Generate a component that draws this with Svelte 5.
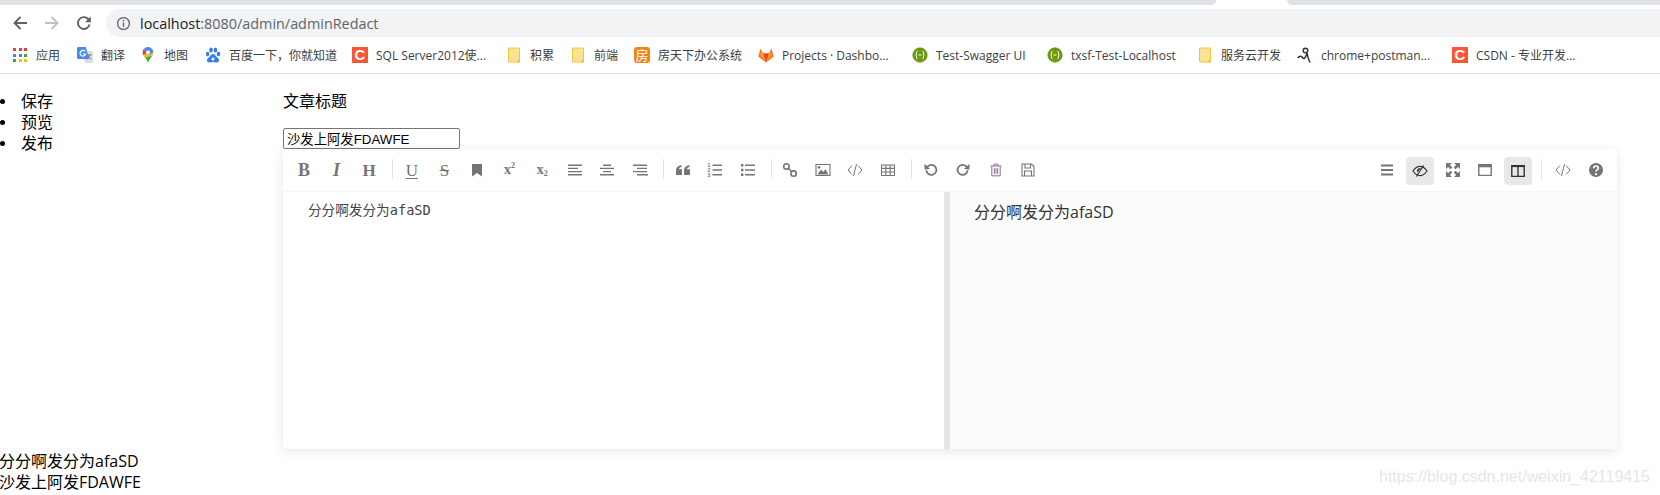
<script>
  const bookmarks = [
    { icon: 'apps', label: '应用', w: 23 },
    { icon: 'translate', label: '翻译', w: 21 },
    { icon: 'maps', label: '地图', w: 23 },
    { icon: 'baidu', label: '百度一下，你就知道', w: 105 },
    { icon: 'csdn', label: 'SQL Server2012使...', w: 112 },
    { icon: 'folder', label: '积累', w: 22 },
    { icon: 'folder', label: '前端', w: 22 },
    { icon: 'fang', label: '房天下办公系统', w: 82 },
    { icon: 'gitlab', label: 'Projects · Dashbo...', w: 112 },
    { icon: 'swagger', label: 'Test-Swagger UI', w: 93 },
    { icon: 'swagger', label: 'txsf-Test-Localhost', w: 108 },
    { icon: 'folder', label: '服务云开发', w: 58 },
    { icon: 'postman', label: 'chrome+postman...', w: 113 },
    { icon: 'csdn', label: 'CSDN - 专业开发...', w: 104 }
  ];

  const appColors = ['#ea4335', '#ea4335', '#ea4335', '#4285f4', '#4285f4', '#34a853', '#34a853', '#fbbc05', '#fbbc05'];

  const left = [
    [
      { t: 'B', c: 'bold' },
      { t: 'I', c: 'ital' },
      { t: 'H', c: 'head' }
    ],
    [
      { t: 'U', c: 'under' },
      { t: 'S', c: 'strike' },
      { f: 'M3 2h10v12.5L8 11l-5 3.5z' },
      { t: 'x', sup: '2', c: 'script' },
      { t: 'x', sub: '2', c: 'script' },
      { s: 'M1 3.2h14M1 6.4h10M1 9.6h14M1 12.8h14', sw: 1.4 },
      { s: 'M4 3.2h8M1 6.4h14M4 9.6h8M1 12.8h14', sw: 1.4 },
      { s: 'M1 3.2h14M5 6.4h10M1 9.6h14M5 12.8h14', sw: 1.4 }
    ],
    [
      { f: 'M1 8.5C1 5.5 3 3.5 6.5 3v2C5 5.3 4 6 3.8 7.2H7V13H1zM9 8.5C9 5.5 11 3.5 14.5 3v2C13 5.3 12 6 11.8 7.2H15V13H9z' },
      { s: 'M5.5 3.2h9.5M5.5 8h9.5M5.5 12.8h9.5', sw: 1.5, nums: true },
      { s: 'M5 3.2h10M5 8h10M5 12.8h10', sw: 1.6, f: 'M1 2h2.4v2.4H1zM1 6.8h2.4v2.4H1zM1 11.6h2.4V14H1z' }
    ],
    [
      { s: 'M6.8 6.8l2.4 2.4', sw: 1.6, c1: [4.4, 4.4, 2.7], c2: [11.6, 11.6, 2.7] },
      { s: 'M1 2.5h14v11H1z', sw: 1.1, f: 'M2.5 12.5l3.5-5 2.5 2.5 2-3 3 5.500zM4 4a1.400 1.400 0 1 0 .01 0z' },
      { s: 'M5 3.5L1 8l4 4.5M11 3.5l4 4.5-4 4.5M9.5 2L6.5 14', sw: 1 },
      { s: 'M1.5 3h13v10.5h-13zM1.5 6.4h13M1.5 10h13M5.8 3v10.5M10.2 3v10.5', sw: 1.1 }
    ],
    [
      { s: 'M3.4 8.2A5 5 0 1 0 5 4.2L2.6 6', sw: 1.8, f: 'M1.4 1.8l.2 5.8 5.4-.6z' },
      { s: 'M12.6 8.2A5 5 0 1 1 11 4.2L13.4 6', sw: 1.8, f: 'M14.6 1.8l-.2 5.8-5.4-.6z' },
      { s: 'M2.5 4h11M6 4V2.2h4V4M3.8 4v9.8h8.4V4M6.3 6.2v5.6M8 6.2v5.6M9.7 6.2v5.6', sw: 1, tone: 'plum' },
      { s: 'M2 2h9.5L14 4.5V14H2zM5 2v4h5.5V2M4.5 14V9h7v5', sw: 1.1 }
    ]
  ];

  const right = [
    [
      { s: 'M2 3.5h12M2 8h12M2 12.5h12', sw: 1.8 },
      { s: 'M1 8c2-3 4.4-4.6 7-4.6S13 5 15 8c-2 3-4.4 4.6-7 4.6S3 11 1 8zM11.5 2.5l-7 11', sw: 1.2, f: 'M8 5a3 3 0 0 0-2.6 4.6L8.9 5.1A3 3 0 0 0 8 5z', on: true },
      { f: 'M1 1h6L4.900 3.100 7.300 5.500 5.500 7.300 3.100 4.900 1 7zM15 1v6l-2.100-2.100L10.500 7.300 8.700 5.500 11.100 3.100 9 1zM1 15V9l2.100 2.100L5.500 8.700 7.300 10.500 4.900 12.900 7 15zM15 15H9l2.100-2.100L8.700 10.500 10.500 8.700 12.900 11.100 15 9z' },
      { s: 'M1.800 2.600h12.400v10.800H1.800z', sw: 1.4, f: 'M1.500 2.300h13v3h-13z' },
      { s: 'M1.800 2.600h12.400v10.800H1.800zM8 2.600v10.800', sw: 1.4, f: 'M1.500 2.300h13v1.800h-13z', on: true }
    ],
    [
      { s: 'M5 3.5L1 8l4 4.5M11 3.5l4 4.5-4 4.5M9.5 2L6.5 14', sw: 1 },
      { f: 'M8 1a7 7 0 1 0 .01 0z', s: 'M5.800 6.200C5.800 4.900 6.800 4 8 4s2.300.9 2.300 2.100c0 1.800-2.300 1.800-2.300 3.500', sw: 1.7, tone: 'help' }
    ]
  ];
</script>

{#snippet favicon(kind)}
  {#if kind === 'apps'}
    <span class="apps">
      {#each appColors as color}
        <i style:background={color}></i>
      {/each}
    </span>
  {:else if kind === 'translate'}
    <svg class="fav" viewBox="0 0 16 16">
      <path d="M6 4h9a1 1 0 0 1 1 1v10a1 1 0 0 1-1 1H8z" fill="#d9dce0" />
      <path d="M1.200 0h7.600L12 12H1.200A1.200 1.200 0 0 1 0 10.800V1.200A1.200 1.200 0 0 1 1.200 0z" fill="#4a8af4" />
      <path d="M8 4.400A2.800 2.800 0 1 0 8.600 7H6" fill="none" stroke="#fff" stroke-width="1.200" />
      <path d="M10 8h4.500M12.200 7v1.200c0 1.800-1 3-2.400 3.800M11 9c.4 1.200 1.600 2.400 3.200 3" fill="none" stroke="#6b7076" stroke-width=".9" />
    </svg>
  {:else if kind === 'maps'}
    <svg class="fav" viewBox="0 0 16 16">
      <path d="M3.600 8.400c1.400 2 3.400 3.800 4.400 7.600 1-3.800 3-5.600 4.400-7.600z" fill="#34a853" />
      <path d="M8 0a5.400 5.400 0 0 0-4.200 2L7 6l4.600-4.600A5.400 5.400 0 0 0 8 0z" fill="#4285f4" />
      <path d="M3.800 2a5.400 5.400 0 0 0-1.200 3.400c0 1.200.4 2.200 1 3L7 6z" fill="#ea4335" />
      <path d="M11.600 1.400L3.600 8.400l2 2.400 6.800-2.400c.6-.8 1-1.800 1-3 0-1.600-.7-3-1.800-4z" fill="#fbbc05" />
      <path d="M11.600 1.400L6 7l4 .5 3-2.500c0-1.500-.4-2.600-1.400-3.600z" fill="#4285f4" />
      <circle cx="8" cy="5.400" r="1.900" fill="#fff" />
    </svg>
  {:else if kind === 'baidu'}
    <svg class="fav" viewBox="0 0 16 16" fill="#3a7cf0">
      <ellipse cx="2.600" cy="7" rx="1.800" ry="2.300" />
      <ellipse cx="6" cy="3" rx="1.800" ry="2.500" />
      <ellipse cx="10.400" cy="3" rx="1.800" ry="2.500" />
      <ellipse cx="13.500" cy="7" rx="1.800" ry="2.300" />
      <path d="M8 7c-2 0-2.500 2-4 3.200C2.600 11.300 2 12.300 2 13.300 2 15 3.500 15.800 5 15.500c1-.2 2-.4 3-.4s2 .2 3 .4c1.500.3 3-.5 3-2.200 0-1-.6-2-2-3.100C10.500 9 10 7 8 7z" />
      <circle cx="8" cy="12" r="1.500" fill="#fff" />
    </svg>
  {:else if kind === 'csdn'}
    <span class="badge csdn">C</span>
  {:else if kind === 'folder'}
    <svg class="fav" viewBox="0 0 16 16">
      <path d="M2.500 1h10.500a.5.500 0 0 1 .5.500V15H3a.5.500 0 0 1-.5-.5z" fill="#fde293" stroke="#f1c542" />
      <path d="M11.500 12.800h2.500V15.500h-2.500z" fill="#f1c542" />
    </svg>
  {:else if kind === 'fang'}
    <span class="badge fang">房</span>
  {:else if kind === 'gitlab'}
    <svg class="fav" viewBox="0 0 16 16">
      <path d="M8 15.500L.3 9.500 2.600 1.500 5 6.500h6l2.400-5 2.300 8z" fill="#fc6d26" />
      <path d="M8 15.500L5 6.500h6z" fill="#e24329" />
      <path d="M8 15.500L5 6.500H1.400z" fill="#fca326" />
      <path d="M8 15.500L11 6.500h3.600z" fill="#fca326" />
    </svg>
  {:else if kind === 'swagger'}
    <svg class="fav" viewBox="0 0 16 16">
      <circle cx="8" cy="8" r="7.200" fill="#6d9b08" stroke="#55800a" stroke-width=".6" />
      <path d="M5.600 3.800C4 4.500 5.200 7.200 3.800 8c1.400.8.200 3.500 1.800 4.200M10.400 3.800c1.600.7.400 3.400 1.800 4.200-1.400.8-.2 3.500-1.800 4.200M6.500 8h3" fill="none" stroke="#fff" stroke-width="1" />
    </svg>
  {:else}
    <svg class="fav" viewBox="0 0 16 16">
      <circle cx="8.500" cy="3.500" r="2.300" fill="none" stroke="#333" stroke-width="1.400" />
      <path d="M.500 11c2-2.500 4-2.500 5.500 0 1 1.600 3-.5 4-5 .5 3 1.500 6.500 3 9.500" fill="none" stroke="#333" stroke-width="1.500" />
    </svg>
  {/if}
{/snippet}

{#snippet tool(b)}
  <span class="tool" class:on={b.on}>
    {#if b.t}
      <span class="glyph {b.c}">{b.t}{#if b.sup}<sup>{b.sup}</sup>{/if}{#if b.sub}<sub>{b.sub}</sub>{/if}</span>
    {:else}
      <svg class="ico {b.tone || ''}" viewBox="0 0 16 16">
        {#if b.tone === 'help'}
          <path class="fill" d={b.f} />
          <path class="line white" d={b.s} stroke-width={b.sw} />
          <circle cx="8" cy="12.200" r="1.100" fill="#fff" />
        {:else}
          {#if b.s}<path class="line" d={b.s} stroke-width={b.sw} />{/if}
          {#if b.f}<path class="fill" d={b.f} />{/if}
          {#if b.c1}<circle class="line" cx={b.c1[0]} cy={b.c1[1]} r={b.c1[2]} stroke-width="1.600" />{/if}
          {#if b.c2}<circle class="line" cx={b.c2[0]} cy={b.c2[1]} r={b.c2[2]} stroke-width="1.600" />{/if}
          {#if b.nums}
            <text x="0.500" y="4.800" class="num">1</text>
            <text x="0.500" y="9.600" class="num">2</text>
            <text x="0.500" y="14.600" class="num">3</text>
          {/if}
        {/if}
      </svg>
    {/if}
  </span>
{/snippet}

{#snippet groups(list)}
  {#each list as group, i}
    {#if i > 0}<span class="sep"></span>{/if}
    {#each group as b}
      {@render tool(b)}
    {/each}
  {/each}
{/snippet}

<div class="chrome">
  <div class="tabs">
    <div class="tab-off first"></div>
    <div class="tab-on"></div>
    <div class="tab-off last"></div>
  </div>
  <div class="nav">
    <svg class="nav-ico" viewBox="0 0 16 16"><path d="M15 8H2.500M8.500 2L2.500 8l6 6" fill="none" stroke="#5f6368" stroke-width="1.900" /></svg>
    <svg class="nav-ico" viewBox="0 0 16 16"><path d="M1 8h12.500M7.500 2l6 6-6 6" fill="none" stroke="#bdc1c6" stroke-width="1.900" /></svg>
    <svg class="nav-ico" viewBox="0 0 16 16"><path d="M13.600 9.500A5.900 5.900 0 1 1 12.200 4l1.500 1.600" fill="none" stroke="#5f6368" stroke-width="1.900" /><path d="M14.800 1.500v5.800H9z" fill="#5f6368" /></svg>
    <div class="omni">
      <svg class="info" viewBox="0 0 16 16"><circle cx="8" cy="8" r="6.300" fill="none" stroke="#5f6368" stroke-width="1.400" /><path d="M8 7v4.500" stroke="#5f6368" stroke-width="1.500" /><circle cx="8" cy="4.900" r=".95" fill="#5f6368" /></svg>
      <span class="url"><b>localhost</b>:8080/admin/adminRedact</span>
    </div>
  </div>
  <div class="marks">
    {#each bookmarks as m}
      <div class="mark">
        <span class="slot">{@render favicon(m.icon)}</span>
        <span class="mark-label" style:width="{m.w}px">{m.label}</span>
      </div>
    {/each}
  </div>
</div>

<main class="page">
  <ul class="menu">
    <li>保存</li>
    <li>预览</li>
    <li>发布</li>
  </ul>
  <section class="form">
    <p class="title">文章标题</p>
    <input class="title-input" value="沙发上阿发FDAWFE" />
    <div class="editor">
      <div class="toolbar">
        <div class="tool-group">{@render groups(left)}</div>
        <div class="tool-group end">{@render groups(right)}</div>
      </div>
      <div class="panes">
        <div class="source">分分啊发分为afaSD</div>
        <div class="preview">分分啊发分为afaSD</div>
      </div>
    </div>
  </section>
</main>

<div class="result">
  <div>分分啊发分为afaSD</div>
  <div>沙发上阿发FDAWFE</div>
</div>

<div class="watermark">https://blog.csdn.net/weixin_42119415</div>

<style>
  :global(body) {
    margin: 0;
    background: #fff;
    color: #000;
    font-family: "Open Sans", "Noto Sans CJK SC", sans-serif;
    font-size: 16px;
    overflow: hidden;
  }

  .chrome {
    border-bottom: 1px solid #dadce0;
    height: 73px;
  }

  .tabs {
    display: flex;
    height: 5px;
  }

  .tab-off {
    background: #dee1e6;
  }

  .first {
    width: 1216px;
    border-bottom-right-radius: 5px;
  }

  .tab-on {
    width: 71px;
  }

  .last {
    flex: 1;
    border-bottom-left-radius: 5px;
  }

  .nav {
    display: flex;
    align-items: center;
    box-sizing: border-box;
    height: 32px;
    padding: 4px 0 0 12px;
  }

  .nav-ico {
    width: 16px;
    height: 16px;
    margin-right: 16px;
    flex: none;
  }

  .omni {
    flex: 1;
    display: flex;
    align-items: center;
    height: 28px;
    margin-left: -2px;
    padding-left: 10px;
    background: #f1f3f4;
    border-radius: 14px 0 0 14px;
  }

  .info {
    width: 15px;
    height: 15px;
    margin-right: 9px;
  }

  .url {
    font-size: 14.400px;
    color: #5f6368;
    white-space: nowrap;
  }

  .url b {
    color: #202124;
    font-weight: 400;
  }

  .marks {
    display: flex;
    align-items: center;
    height: 36px;
    padding-left: 12px;
    gap: 18px;
  }

  .mark {
    display: flex;
    align-items: center;
    gap: 8px;
    flex: none;
  }

  .slot {
    width: 16px;
    height: 16px;
    display: flex;
    align-items: center;
    justify-content: center;
  }

  .fav {
    width: 16px;
    height: 16px;
  }

  .apps {
    display: grid;
    grid-template-columns: repeat(3, 3px);
    grid-auto-rows: 3px;
    gap: 2.500px;
  }

  .badge {
    width: 16px;
    height: 16px;
    display: flex;
    align-items: center;
    justify-content: center;
    color: #fff;
    line-height: 16px;
  }

  .csdn {
    background: #fc5531;
    font: 700 15px/16px "Liberation Sans", sans-serif;
  }

  .fang {
    background: #f08519;
    border-radius: 3px;
    font-size: 13px;
  }

  .mark-label {
    font-size: 12px;
    color: #3c4043;
    white-space: nowrap;
  }

  .page {
    display: flex;
    height: 375px;
  }

  .menu {
    flex: none;
    width: 283px;
    box-sizing: border-box;
    margin: 17px 0 0;
    padding: 0;
    list-style: none;
    line-height: 21px;
  }

  .menu li {
    display: flex;
    align-items: center;
  }

  .menu li::before {
    content: "";
    flex: none;
    width: 5px;
    height: 5px;
    margin-right: 16px;
    border-radius: 50%;
    background: #000;
  }

  .form {
    flex: none;
    width: 1334px;
    padding-top: 17px;
  }

  .title {
    margin: 0;
    line-height: 21px;
  }

  .title-input {
    display: block;
    box-sizing: border-box;
    width: 177px;
    height: 21px;
    margin: 16px 0 0;
    padding: 1px 3px;
    border: 1px solid #767676;
    border-radius: 2px;
    font: 13.333px "Liberation Sans", "Noto Sans CJK SC", sans-serif;
    color: #000;
    background: #fff;
  }

  .editor {
    height: 300px;
    display: flex;
    flex-direction: column;
    background: #fff;
    border-radius: 4px;
    box-shadow: 0 2px 12px rgba(0, 0, 0, 0.1);
  }

  .toolbar {
    flex: none;
    display: flex;
    justify-content: space-between;
    box-sizing: border-box;
    height: 43px;
    padding: 8px 7px 6px 7px;
    border-bottom: 1px solid #f2f6fc;
  }

  .tool-group {
    display: flex;
    gap: 4.600px;
    align-items: flex-start;
  }

  .end .sep {
    margin-right: 3px;
  }

  .tool {
    width: 28px;
    height: 28px;
    flex: none;
    display: flex;
    align-items: center;
    justify-content: center;
    border-radius: 4px;
    margin-top: -1px;
  }

  .tool.on {
    background: #e8e8e8;
    margin-top: 0;
  }

  .tool.on .ico {
    --ink: #333;
  }

  .sep {
    width: 1px;
    height: 20px;
    margin: 2px 0 0 4.400px;
    background: #e4e4e4;
    flex: none;
  }

  .glyph {
    font-family: "Liberation Serif", serif;
    color: #757575;
    font-size: 18px;
    line-height: 1;
    white-space: nowrap;
  }

  .bold { font-weight: 700; }
  .ital { font-style: italic; font-weight: 700; }
  .head { font-weight: 700; font-size: 17px; }
  .under { font-size: 17px; text-decoration: underline; text-underline-offset: 2px; }
  .strike { font-size: 17px; text-decoration: line-through; }
  .script { font-weight: 700; font-size: 14px; }

  sup, sub {
    font-size: 8px;
    line-height: 0;
  }

  sub {
    vertical-align: -2px;
  }

  .ico {
    --ink: #757575;
    width: 16px;
    height: 16px;
    display: block;
  }

  .ico.plum {
    --ink: #8a6d8e;
  }

  .line {
    fill: none;
    stroke: var(--ink);
  }

  .line.white {
    stroke: #fff;
  }

  .fill {
    fill: var(--ink);
  }

  .num {
    font: 700 5px "Liberation Sans", sans-serif;
    fill: var(--ink);
  }

  .panes {
    flex: 1;
    display: flex;
    min-height: 0;
  }

  .source {
    flex: none;
    width: 667px;
    box-sizing: border-box;
    padding: 8px 25px;
    font: 13.640px/20px "DejaVu Sans Mono", "Noto Sans CJK SC", monospace;
    color: #444;
    border-right: 6px solid #e5e5e5;
  }

  .preview {
    flex: 1;
    padding: 9px 24px;
    background: #fbfbfb;
    border-radius: 0 0 4px 0;
    line-height: 22px;
    color: #333;
  }

  .result {
    line-height: 21px;
    padding-top: 2px;
    margin-left: -1px;
  }

  .watermark {
    position: absolute;
    left: 1379px;
    top: 467px;
    font: 16px/20px "Liberation Sans", sans-serif;
    color: #e6e6e6;
    white-space: nowrap;
  }
</style>
